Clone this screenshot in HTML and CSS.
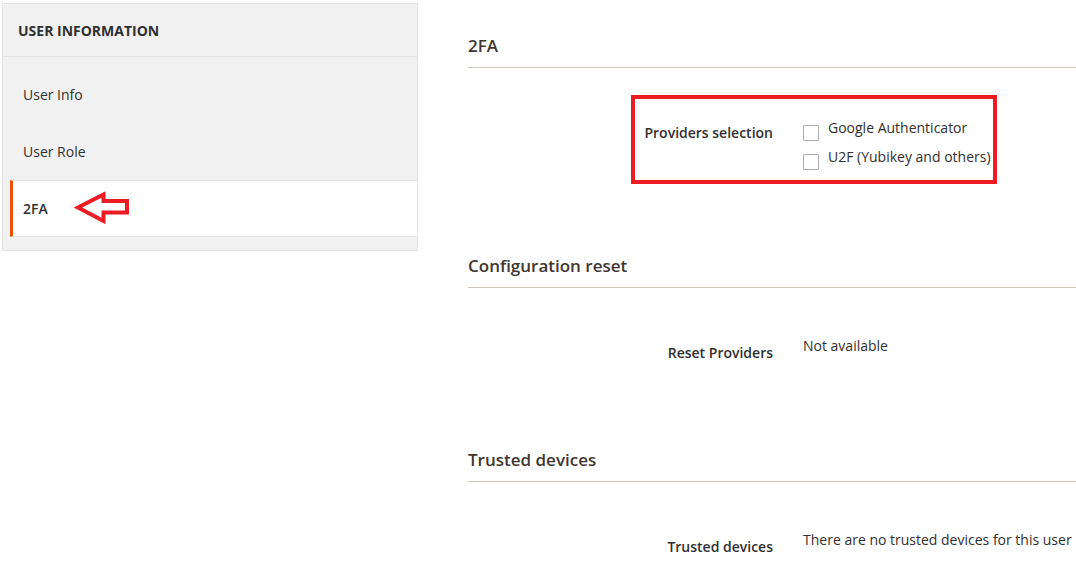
FILE: index.html
```html
<!DOCTYPE html>
<html lang="en">
<head>
<meta charset="utf-8">
<title>User 2FA</title>
<link rel="stylesheet" href="styles.css">
</head>
<body>
<div class="page">
  <aside class="nav">
    <div class="nav-title">User Information</div>
    <ul class="nav-items">
      <li class="nav-item">User Info</li>
      <li class="nav-item">User Role</li>
      <li class="nav-item active">2FA
        <svg class="arrow" width="70" height="44" viewBox="0 0 70 44" aria-hidden="true">
          <path d="M8 19.5 L33.5 6.5 L33.5 13 L57 13 L57 24.5 L33.5 24.5 L33.5 33 Z" fill="none" stroke="#ed1c24" stroke-width="4" stroke-linejoin="miter"/>
        </svg>
      </li>
    </ul>
  </aside>
  <main class="content">
    <section class="fieldset first">
      <h2 class="legend">2FA</h2>
      <div class="field highlight">
        <div class="label first-label">Providers selection</div>
        <div class="control options">
          <label class="option"><span class="checkbox"></span><span>Google Authenticator</span></label>
          <label class="option"><span class="checkbox"></span><span>U2F (Yubikey and others)</span></label>
        </div>
      </div>
    </section>
    <section class="fieldset">
      <h2 class="legend">Configuration reset</h2>
      <div class="field">
        <div class="label">Reset Providers</div>
        <div class="control">Not available</div>
      </div>
    </section>
    <section class="fieldset last">
      <h2 class="legend">Trusted devices</h2>
      <div class="field">
        <div class="label">Trusted devices</div>
        <div class="control">There are no trusted devices for this user</div>
      </div>
    </section>
  </main>
</div>
</body>
</html>
```
FILE: styles.css
```css
*, *::before, *::after { box-sizing: border-box; }
html, body { margin: 0; padding: 0; background: #fff; }
body {
  font-family: "Open Sans", "Liberation Sans", sans-serif;
  font-size: 14px;
  color: #303030;
  overflow: hidden;
}
.page {
  display: flex;
  align-items: flex-start;
  padding: 3px 0 0 2px;
  gap: 50px;
}
.nav {
  width: 416px;
  flex: none;
  background: #f1f1f1;
  border: 1px solid #e3e3e3;
}
.nav-title {
  height: 53px;
  display: flex;
  align-items: center;
  padding-left: 15px;
  padding-top: 1px;
  font-weight: 700;
  text-transform: uppercase;
  font-size: 14px;
  color: #303030;
  border-bottom: 1px solid #e3e3e3;
}
.nav-items {
  list-style: none;
  margin: 0;
  padding: 9px 0 13px 7px;
}
.nav-item {
  height: 57px;
  display: flex;
  align-items: center;
  padding-left: 13px;
  color: #303030;
  position: relative;
}
.nav-item.active {
  background: #fff;
  border-left: 3px solid #eb5202;
  border-top: 1px solid #e3e3e3;
  border-bottom: 1px solid #e3e3e3;
  padding-left: 10px;
  font-weight: 600;
}
.arrow {
  position: absolute;
  left: 57px;
  top: 7px;
}
.content {
  flex: 1;
  min-width: 0;
}
.fieldset { margin-top: 85px; }
.fieldset.first { margin-top: 32px; }
.fieldset.last { margin-top: 86px; }
.legend {
  margin: 0;
  font-size: 17px;
  font-weight: 600;
  line-height: 22px;
  color: #41362f;
  padding-bottom: 10px;
  border-bottom: 1px solid #cdc6bf;
}
.field {
  display: grid;
  grid-template-columns: 305px 1fr;
  column-gap: 30px;
  margin-top: 48px;
  line-height: 20px;
  position: relative;
}
.label {
  text-align: right;
  font-weight: 600;
  padding-top: 7px;
}
.label.first-label { padding-top: 5px; }
.field.highlight { margin-top: 50px; }
.field.highlight::after {
  content: "";
  position: absolute;
  left: 163px;
  top: -23px;
  width: 366px;
  height: 89px;
  border: 4px solid #ed1c24;
  pointer-events: none;
}
.options {
  display: flex;
  flex-direction: column;
  gap: 6px;
}
.option {
  display: flex;
  align-items: flex-start;
  gap: 9px;
}
.checkbox {
  width: 16px;
  height: 16px;
  margin-top: 7px;
  border: 1px solid #adadad;
  border-radius: 1px;
  background: #fff;
  flex: none;
}
```
